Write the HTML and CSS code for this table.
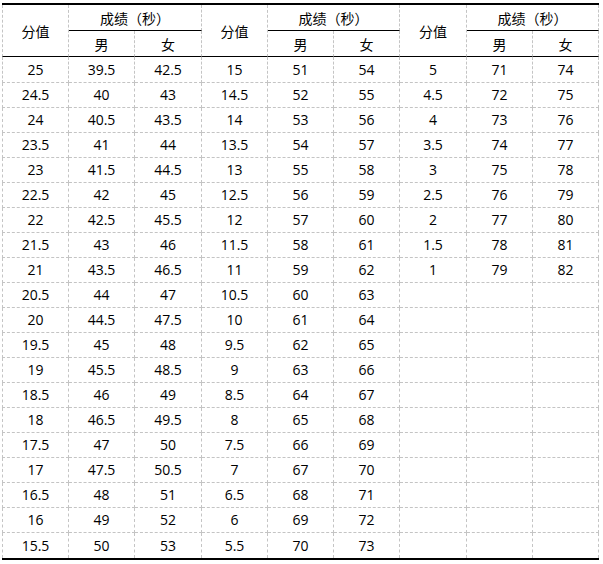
FILE: index.html
```html
<!DOCTYPE html>
<html lang="zh">
<head>
<meta charset="utf-8">
<title>成绩表</title>
<link rel="stylesheet" href="styles.css">
</head>
<body>
<table class="score">
  <colgroup>
    <col class="w67"><col class="w66"><col class="w67">
    <col class="w66"><col class="w66"><col class="w66">
    <col class="w67"><col class="w66"><col class="w66">
  </colgroup>
  <thead>
    <tr class="h1">
      <th rowspan="2" class="first hb">分值</th>
      <th colspan="2" class="sub">成绩（秒）</th>
      <th rowspan="2" class="hb">分值</th>
      <th colspan="2" class="sub">成绩（秒）</th>
      <th rowspan="2" class="hb">分值</th>
      <th colspan="2" class="sub">成绩（秒）</th>
    </tr>
    <tr class="h2">
      <th class="hb">男</th><th class="hb">女</th>
      <th class="hb">男</th><th class="hb">女</th>
      <th class="hb">男</th><th class="hb">女</th>
    </tr>
  </thead>
  <tbody>
    <tr class="r1"><td class="first">25</td><td>39.5</td><td>42.5</td><td>15</td><td>51</td><td>54</td><td>5</td><td>71</td><td>74</td></tr>
    <tr><td class="first">24.5</td><td>40</td><td>43</td><td>14.5</td><td>52</td><td>55</td><td>4.5</td><td>72</td><td>75</td></tr>
    <tr><td class="first">24</td><td>40.5</td><td>43.5</td><td>14</td><td>53</td><td>56</td><td>4</td><td>73</td><td>76</td></tr>
    <tr><td class="first">23.5</td><td>41</td><td>44</td><td>13.5</td><td>54</td><td>57</td><td>3.5</td><td>74</td><td>77</td></tr>
    <tr><td class="first">23</td><td>41.5</td><td>44.5</td><td>13</td><td>55</td><td>58</td><td>3</td><td>75</td><td>78</td></tr>
    <tr><td class="first">22.5</td><td>42</td><td>45</td><td>12.5</td><td>56</td><td>59</td><td>2.5</td><td>76</td><td>79</td></tr>
    <tr><td class="first">22</td><td>42.5</td><td>45.5</td><td>12</td><td>57</td><td>60</td><td>2</td><td>77</td><td>80</td></tr>
    <tr><td class="first">21.5</td><td>43</td><td>46</td><td>11.5</td><td>58</td><td>61</td><td>1.5</td><td>78</td><td>81</td></tr>
    <tr><td class="first">21</td><td>43.5</td><td>46.5</td><td>11</td><td>59</td><td>62</td><td>1</td><td>79</td><td>82</td></tr>
    <tr><td class="first">20.5</td><td>44</td><td>47</td><td>10.5</td><td>60</td><td>63</td><td></td><td></td><td></td></tr>
    <tr><td class="first">20</td><td>44.5</td><td>47.5</td><td>10</td><td>61</td><td>64</td><td></td><td></td><td></td></tr>
    <tr><td class="first">19.5</td><td>45</td><td>48</td><td>9.5</td><td>62</td><td>65</td><td></td><td></td><td></td></tr>
    <tr><td class="first">19</td><td>45.5</td><td>48.5</td><td>9</td><td>63</td><td>66</td><td></td><td></td><td></td></tr>
    <tr><td class="first">18.5</td><td>46</td><td>49</td><td>8.5</td><td>64</td><td>67</td><td></td><td></td><td></td></tr>
    <tr><td class="first">18</td><td>46.5</td><td>49.5</td><td>8</td><td>65</td><td>68</td><td></td><td></td><td></td></tr>
    <tr><td class="first">17.5</td><td>47</td><td>50</td><td>7.5</td><td>66</td><td>69</td><td></td><td></td><td></td></tr>
    <tr><td class="first">17</td><td>47.5</td><td>50.5</td><td>7</td><td>67</td><td>70</td><td></td><td></td><td></td></tr>
    <tr><td class="first">16.5</td><td>48</td><td>51</td><td>6.5</td><td>68</td><td>71</td><td></td><td></td><td></td></tr>
    <tr><td class="first">16</td><td>49</td><td>52</td><td>6</td><td>69</td><td>72</td><td></td><td></td><td></td></tr>
    <tr class="last"><td class="first">15.5</td><td>50</td><td>53</td><td>5.5</td><td>70</td><td>73</td><td></td><td></td><td></td></tr>
  </tbody>
</table>
</body>
</html>
```

FILE: styles.css
```css
html, body {
  margin: 0;
  padding: 0;
  background: #ffffff;
}

body {
  padding: 3px 0 0 2px;
}

.score {
  border-collapse: separate;
  border-spacing: 0;
  table-layout: fixed;
  width: 597px;
  border-top: 2px solid #000000;
  border-bottom: 2px solid #000000;
  font-family: "Open Sans", "Noto Sans CJK SC", sans-serif;
  font-size: 14px;
  color: #000000;
}

.w67 { width: 67px; }
.w66 { width: 66px; }

.score th,
.score td {
  padding: 0;
  text-align: center;
  vertical-align: middle;
  font-weight: normal;
  border-right: 1px dashed #c4c4c4;
  border-bottom: 1px dashed #c4c4c4;
  line-height: 18px;
  white-space: nowrap;
}

.score th {
  font-family: "Noto Sans CJK SC", sans-serif;
}

.score .first {
  border-left: 1px dashed #c4c4c4;
}

.score th.sub,
.score th.hb {
  border-bottom: 1px solid #000000;
}

.h1 { height: 26px; }
.h2 { height: 26px; }
.score tbody tr { height: 25px; }
.score tbody tr.r1 { height: 26px; }
.score tbody tr.last td { border-bottom: none; }
```
